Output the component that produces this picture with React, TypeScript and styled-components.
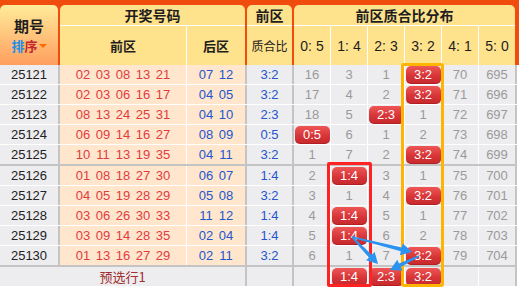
import React from 'react';
import styled, { createGlobalStyle } from 'styled-components';

const ORANGE = '#ef4c0d';
const HEAD_BG = '#ffe28c';
const GRAY_BG = '#edecee';
const PEACH = '#ffe6cc';
const SEP = '#c4c4c4';
const RED = '#e23b3f';
const BLUE = '#2356cf';

const GlobalStyle = createGlobalStyle`
  html, body { margin: 0; padding: 0; background: #fff; }
  body { font-family: "Liberation Sans", "Noto Sans CJK SC", Arial, sans-serif; }
`;

const Board = styled.div`
  position: relative;
  width: 519px;
  height: 289px;
  overflow: hidden;
  background: #fff;
`;

const Head = styled.div`
  display: flex;
  gap: 2px;
  height: 65px;
  box-sizing: border-box;
  padding: 5px 4px 0 0;
  background: ${ORANGE};
  font-family: "Noto Sans CJK SC", "Liberation Sans", sans-serif;
  color: #1e1e1e;
`;

const PeriodHead = styled.div`
  width: 58px;
  border-radius: 5px 5px 0 0;
  background: linear-gradient(#ffeb9a, #ff9e5e);
  display: flex;
  flex-direction: column;
  align-items: center;
  justify-content: center;
`;

const PeriodTitle = styled.div`
  font-size: 15px;
  font-weight: 700;
  line-height: 17px;
  height: 17px;
`;

const SortLine = styled.div`
  display: flex;
  align-items: center;
  margin-top: 5px;
  height: 14px;
  font-size: 13px;
  font-weight: 700;
  line-height: 14px;
`;

const SortChar = styled.span<{ $c: string }>`
  color: ${(p) => p.$c};
`;

const Caret = styled.span`
  width: 0;
  height: 0;
  margin-left: 1px;
  border-left: 4px solid transparent;
  border-right: 4px solid transparent;
  border-top: 4px solid #ff6a00;
`;

const Group = styled.div<{ $w: number }>`
  width: ${(p) => p.$w}px;
  display: flex;
  flex-direction: column;
`;

const GroupTitle = styled.div`
  height: 21px;
  box-sizing: border-box;
  border-bottom: 1px solid #fff;
  border-radius: 5px 5px 0 0;
  background: ${HEAD_BG};
  display: flex;
  align-items: center;
  justify-content: center;
  font-size: 14px;
  font-weight: 700;
`;

const SubRow = styled.div`
  flex: 1;
  display: flex;
`;

const SubCell = styled.div<{ $w: number; $size: number; $bold?: boolean; $latin?: boolean }>`
  width: ${(p) => p.$w}px;
  box-sizing: content-box;
  background: ${HEAD_BG};
  display: flex;
  align-items: center;
  justify-content: center;
  font-size: ${(p) => p.$size}px;
  font-weight: ${(p) => (p.$bold ? 700 : 400)};
  font-family: ${(p) => (p.$latin ? '"Liberation Sans", Arial, sans-serif' : 'inherit')};
  & + & {
    border-left: 1px solid #fff;
  }
`;

const COLS = '60px 127px 60px 47px 37px 37px 37px 37px 37px 38px';

const Row = styled.div<{ $thick?: boolean }>`
  display: grid;
  grid-template-columns: ${COLS};
  width: 517px;
  height: ${(p) => (p.$thick ? 21 : 20)}px;
  box-sizing: border-box;
  border-bottom: ${(p) => (p.$thick ? `2px solid ${SEP}` : '1px solid #fff')};
`;

const Cell = styled.div<{ $tone: 'gray' | 'peach'; $edge: 'gray' | 'white'; $span?: number }>`
  grid-column: span ${(p) => p.$span ?? 1};
  display: flex;
  align-items: center;
  justify-content: center;
  box-sizing: border-box;
  background: ${(p) => (p.$tone === 'peach' ? PEACH : GRAY_BG)};
  border-right: ${(p) => (p.$edge === 'gray' ? `2px solid ${SEP}` : '1px solid #fff')};
  font-size: 13px;
  white-space: nowrap;
`;

const PeriodText = styled.span`
  color: #222;
`;

const Ball = styled.span<{ $c: string }>`
  width: 20px;
  text-align: center;
  color: ${(p) => p.$c};
`;

const RatioText = styled.span`
  color: ${BLUE};
`;

const Count = styled.span`
  color: #9a9a9a;
`;

const Pill = styled.span`
  width: 35px;
  height: 18px;
  border-radius: 5px;
  display: flex;
  align-items: center;
  justify-content: center;
  color: #fff;
  font-size: 13px;
  background: linear-gradient(#ef5656, #d63538 55%, #c6282c);
  box-shadow: inset 0 -1px 0 rgba(120, 0, 0, 0.25);
`;

const PresetText = styled.span`
  color: #a02e2e;
  font-family: "Noto Sans CJK SC", "Liberation Sans", sans-serif;
  font-size: 13px;
`;

const Frame = styled.div<{ $c: string; $radius: number }>`
  position: absolute;
  box-sizing: border-box;
  border: 3px solid ${(p) => p.$c};
  border-radius: ${(p) => p.$radius}px;
  pointer-events: none;
`;

const ArrowLayer = styled.svg`
  position: absolute;
  left: 0;
  top: 0;
  pointer-events: none;
`;

type R = { p: string; f: string; b: string; r: string; d: (string | number)[]; thick?: boolean };

const rows: R[] = [
  { p: '25121', f: '02 03 08 13 21', b: '07 12', r: '3:2', d: [16, 3, 1, '3:2', 70, 695] },
  { p: '25122', f: '02 03 06 16 17', b: '04 05', r: '3:2', d: [17, 4, 2, '3:2', 71, 696] },
  { p: '25123', f: '08 13 24 25 31', b: '04 10', r: '2:3', d: [18, 5, '2:3', 1, 72, 697] },
  { p: '25124', f: '06 09 14 16 27', b: '08 09', r: '0:5', d: ['0:5', 6, 1, 2, 73, 698] },
  { p: '25125', f: '10 11 13 19 35', b: '04 11', r: '3:2', d: [1, 7, 2, '3:2', 74, 699], thick: true },
  { p: '25126', f: '01 08 18 27 30', b: '06 07', r: '1:4', d: [2, '1:4', 3, 1, 75, 700] },
  { p: '25127', f: '04 05 19 28 29', b: '05 08', r: '3:2', d: [3, 1, 4, '3:2', 76, 701] },
  { p: '25128', f: '03 06 26 30 33', b: '11 12', r: '1:4', d: [4, '1:4', 5, 1, 77, 702] },
  { p: '25129', f: '03 09 14 28 35', b: '02 04', r: '1:4', d: [5, '1:4', 6, 2, 78, 703] },
  { p: '25130', f: '01 13 16 27 29', b: '02 11', r: '3:2', d: [6, 1, 7, '3:2', 79, 704], thick: true },
];

const labels = ['0: 5', '1: 4', '2: 3', '3: 2', '4: 1', '5: 0'];

const DistCell: React.FC<{ v: string | number | null; i: number }> = ({ v, i }) => (
  <Cell $tone="gray" $edge={i === 5 ? 'gray' : 'white'}>
    {v === null ? null : typeof v === 'string' ? <Pill>{v}</Pill> : <Count>{v}</Count>}
  </Cell>
);

function arrowPoints(x1: number, y1: number, x2: number, y2: number) {
  const dx = x2 - x1;
  const dy = y2 - y1;
  const len = Math.hypot(dx, dy);
  const ux = dx / len;
  const uy = dy / len;
  const nx = -uy;
  const ny = ux;
  const L = 11;
  const H = 6;
  const s0 = 0.8;
  const s1 = 2;
  const bx = x2 - ux * L;
  const by = y2 - uy * L;
  const pts = [
    [x1 + nx * s0, y1 + ny * s0],
    [bx + nx * s1, by + ny * s1],
    [bx + nx * H, by + ny * H],
    [x2, y2],
    [bx - nx * H, by - ny * H],
    [bx - nx * s1, by - ny * s1],
    [x1 - nx * s0, y1 - ny * s0],
  ];
  return pts.map(([a, b]) => `${a.toFixed(1)},${b.toFixed(1)}`).join(' ');
}

const arrows = [
  [352, 237, 378, 264],
  [352, 237, 412, 252],
  [419, 256, 390, 270],
];

export default function App() {
  return (
    <Board>
      <GlobalStyle />
      <Head>
        <PeriodHead>
          <PeriodTitle>期号</PeriodTitle>
          <SortLine>
            <SortChar $c="#1b8fe6">排</SortChar>
            <SortChar $c="#c0272d">序</SortChar>
            <Caret />
          </SortLine>
        </PeriodHead>
        <Group $w={185}>
          <GroupTitle>开奖号码</GroupTitle>
          <SubRow>
            <SubCell $w={126} $size={13} $bold>前区</SubCell>
            <SubCell $w={58} $size={13} $bold>后区</SubCell>
          </SubRow>
        </Group>
        <Group $w={45}>
          <GroupTitle>前区</GroupTitle>
          <SubRow>
            <SubCell $w={45} $size={12}>质合比</SubCell>
          </SubRow>
        </Group>
        <Group $w={221}>
          <GroupTitle>前区质合比分布</GroupTitle>
          <SubRow>
            {labels.map((l) => (
              <SubCell key={l} $w={36} $size={14} $latin>{l}</SubCell>
            ))}
          </SubRow>
        </Group>
      </Head>
      {rows.map((r) => (
        <Row key={r.p} $thick={r.thick}>
          <Cell $tone="gray" $edge="gray"><PeriodText>{r.p}</PeriodText></Cell>
          <Cell $tone="peach" $edge="white">
            {r.f.split(' ').map((n, i) => <Ball key={i} $c={RED}>{n}</Ball>)}
          </Cell>
          <Cell $tone="peach" $edge="gray">
            {r.b.split(' ').map((n, i) => <Ball key={i} $c={BLUE}>{n}</Ball>)}
          </Cell>
          <Cell $tone="gray" $edge="gray"><RatioText>{r.r}</RatioText></Cell>
          {r.d.map((v, i) => <DistCell key={i} v={v} i={i} />)}
        </Row>
      ))}
      <Row>
        <Cell $tone="gray" $edge="gray" $span={3}><PresetText>预选行1</PresetText></Cell>
        <Cell $tone="gray" $edge="gray" />
        {[null, '1:4', '2:3', '3:2', null, null].map((v, i) => <DistCell key={i} v={v} i={i} />)}
      </Row>
      <Frame $c="#ff2222" $radius={2} style={{ left: 327, top: 162, width: 45, height: 125 }} />
      <Frame $c="#ffb400" $radius={3} style={{ left: 401, top: 63, width: 43, height: 224 }} />
      <ArrowLayer width={519} height={289} viewBox="0 0 519 289">
        {arrows.map(([a, b, c, d], i) => (
          <polygon key={i} points={arrowPoints(a, b, c, d)} fill="#2d93f0" />
        ))}
      </ArrowLayer>
    </Board>
  );
}
